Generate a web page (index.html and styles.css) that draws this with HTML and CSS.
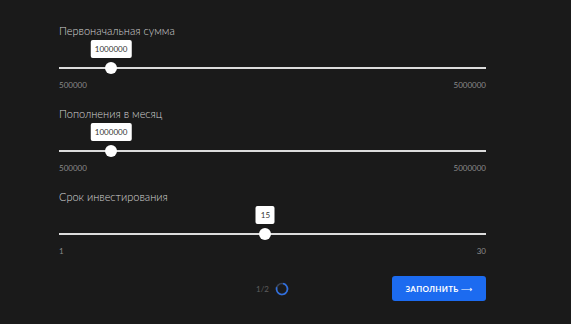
FILE: index.html
```html
<!DOCTYPE html>
<html lang="ru">

<head>
    <meta charset="UTF-8">
    <meta name="viewport" content="width=device-width, initial-scale=1.0">
    <title>Калькулятор</title>
    <link rel="stylesheet" href="styles.css">
</head>

<body>
    <div class="calc">
        <div class="field">
            <div class="label">Первоначальная сумма</div>
            <div class="slider">
                <div class="track"></div>
                <div class="thumb" style="--p: 0.111"></div>
                <div class="tip" style="--p: 0.111">1000000</div>
            </div>
            <div class="range">
                <span>500000</span>
                <span>5000000</span>
            </div>
        </div>

        <div class="field">
            <div class="label">Пополнения в месяц</div>
            <div class="slider">
                <div class="track"></div>
                <div class="thumb" style="--p: 0.111"></div>
                <div class="tip" style="--p: 0.111">1000000</div>
            </div>
            <div class="range">
                <span>500000</span>
                <span>5000000</span>
            </div>
        </div>

        <div class="field">
            <div class="label">Срок инвестирования</div>
            <div class="slider">
                <div class="track"></div>
                <div class="thumb" style="--p: 0.483"></div>
                <div class="tip" style="--p: 0.483">15</div>
            </div>
            <div class="range">
                <span>1</span>
                <span>30</span>
            </div>
        </div>

        <div class="footer">
            <div class="pager">
                <span>1/2</span>
                <svg width="14" height="14" viewBox="0 0 14 14">
                    <circle cx="7" cy="7" r="5.5" fill="none" stroke="#3a4458" stroke-width="1.6" />
                    <circle cx="7" cy="7" r="5.5" fill="none" stroke="#2f6fe0" stroke-width="1.6"
                        stroke-dasharray="26 34.6" transform="rotate(-80 7 7)" />
                </svg>
            </div>
            <button class="fill-btn">ЗАПОЛНИТЬ <span class="arrow">⟶</span></button>
        </div>
    </div>
</body>

</html>
```

FILE: styles.css
```css
body {
    margin: 0;
    padding: 0;
    min-height: 100vh;
    background-color: #1a1a1a;
    font-family: Lato, "Noto Sans", sans-serif;
    color: #d6d6d6;
}

.calc {
    width: 427px;
    padding: 24px 0 0 59px;
}

/* ------------------Fields------------------- */
.field {
    margin-bottom: 17px;
}

.label {
    font-size: 11px;
    line-height: 14px;
    font-weight: 300;
    color: #d4d4d4;
}

.slider {
    position: relative;
    height: 34px;
    margin-top: 1px;
}

.track {
    position: absolute;
    left: 0;
    right: 0;
    top: 28px;
    height: 1.5px;
    background-color: #dcdcdc;
}

.thumb {
    position: absolute;
    top: 23px;
    left: calc(var(--p) * (100% - 12px));
    width: 12px;
    height: 12px;
    border-radius: 50%;
    background-color: #fff;
}

.tip {
    position: absolute;
    top: 1px;
    left: calc(var(--p) * (100% - 12px) + 6px);
    transform: translateX(-50%);
    min-width: 11px;
    height: 18px;
    padding: 0 4px;
    border-radius: 2px;
    background-color: #fff;
    color: #333;
    font-size: 8px;
    line-height: 18px;
    text-align: center;
}

.range {
    display: flex;
    justify-content: space-between;
    margin-top: 7px;
    font-size: 8px;
    line-height: 10px;
    color: #8a8a8a;
}

/* ------------------Footer------------------- */
.footer {
    display: grid;
    grid-template-columns: 1fr auto 1fr;
    align-items: center;
    margin-top: 20px;
}

.pager {
    grid-column: 2;
    display: flex;
    align-items: center;
    gap: 6px;
    font-size: 8px;
    color: #5e5e5e;
}

.pager svg {
    display: block;
}

.fill-btn {
    justify-self: end;
    width: 94px;
    height: 25px;
    border: none;
    border-radius: 3px;
    background-color: #1c6bf0;
    color: #fff;
    font-family: inherit;
    font-size: 8px;
    font-weight: 700;
    letter-spacing: 0.3px;
}

.arrow {
    font-family: "DejaVu Sans", sans-serif;
    font-weight: 400;
}
```
